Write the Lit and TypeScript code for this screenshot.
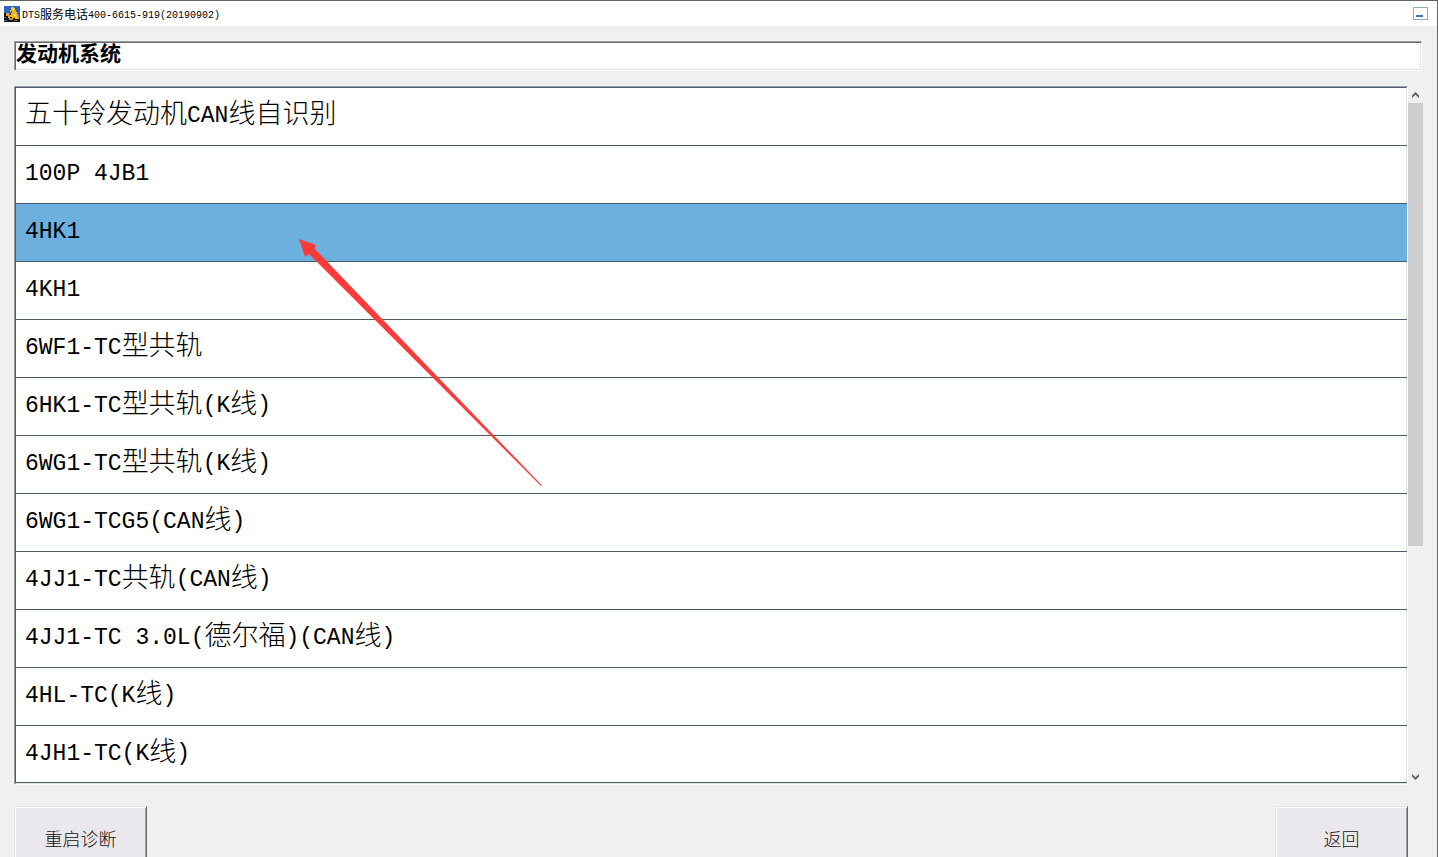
import { LitElement, html, css, svg } from "lit";
import { customElement, property, state } from "lit/decorators.js";
import { classMap } from "lit/directives/class-map.js";

const SYSTEMS = [
  "五十铃发动机CAN线自识别",
  "100P 4JB1",
  "4HK1",
  "4KH1",
  "6WF1-TC型共轨",
  "6HK1-TC型共轨(K线)",
  "6WG1-TC型共轨(K线)",
  "6WG1-TCG5(CAN线)",
  "4JJ1-TC共轨(CAN线)",
  "4JJ1-TC 3.0L(德尔福)(CAN线)",
  "4HL-TC(K线)",
  "4JH1-TC(K线)",
];

const mixed = (text: string) =>
  (text.match(/[\x20-\x7e]+|[^\x20-\x7e]+/g) ?? []).map((run) =>
    /^[\x20-\x7e]/.test(run) ? html`<span class="latin">${run}</span>` : run
  );

@customElement("title-bar")
class TitleBar extends LitElement {
  @property() label = "";

  static styles = css`
    :host {
      display: flex;
      align-items: center;
      justify-content: space-between;
      height: 25px;
      padding: 0 9px 0 4px;
      background: #fff;
      color: #000;
    }
    .title {
      display: flex;
      align-items: center;
      gap: 2px;
      font-size: 12px;
      font-weight: 400;
      line-height: 16px;
      white-space: pre;
    }
    .label {
      padding-top: 2px;
    }
    .latin {
      font-family: "Liberation Mono", monospace;
      font-size: 10px;
      vertical-align: 1px;
    }
    .minimize {
      display: flex;
      justify-content: flex-start;
      align-items: flex-end;
      width: 15px;
      height: 13px;
      padding: 0 0 2px 2px;
      box-sizing: border-box;
      border: 1px solid #8badc4;
      background: #fff;
    }
    .dash {
      width: 7px;
      height: 2px;
      background: #4a74af;
    }
  `;

  render() {
    return html`
      <div class="title">
        <svg width="16" height="16" viewBox="0 0 16 16" shape-rendering="crispEdges" aria-hidden="true">
          <rect width="16" height="16" fill="#2f63c4" />
          <path d="M0 7h3v2h3V8h8v3h2v5H0z" fill="#10141c" />
          <path d="M0 11h2v1H0zM0 14h3v1H0z" fill="#5a6a90" />
          <path d="M7 1h3v1h1v2h1v2h1v2h1v3h1v2h-4v-1H8v-1H6V9h1V7h1V5H7v1H6V4h1z" fill="#f2b71c" />
          <path d="M8 2h2v2H8zM10 8h2v2h-2z" fill="#ffe05a" />
          <path d="M2 7h3v2h1v3H4v-2H2z" fill="#e8a41c" />
          <path d="M5 12h4v2H5z" fill="#c98a18" />
          <path d="M10 14h3v1h-3z" fill="#8a6118" />
        </svg>
        <span class="label">${mixed(this.label)}</span>
      </div>
      <button class="minimize" aria-label="最小化"><span class="dash"></span></button>
    `;
  }
}

@customElement("scroll-rail")
class ScrollRail extends LitElement {
  @property({ type: Number }) share = 1;

  static styles = css`
    :host {
      display: flex;
      flex-direction: column;
      width: 15px;
      background: #f0f0f0;
    }
    .step {
      display: flex;
      align-items: center;
      justify-content: center;
      height: 17px;
      padding: 0;
      border: 0;
      background: none;
    }
    .track {
      flex: 1;
    }
    .thumb {
      background: #cdcdcd;
    }
  `;

  render() {
    const chevron = (d: string) => svg`<path d=${d} fill="#606060" />`;
    return html`
      <button class="step" aria-label="向上">
        <svg width="7" height="6" viewBox="0 0 7 6">${chevron("M3.5 0L7 3.5V6L3.5 2.7L0 6V3.5z")}</svg>
      </button>
      <div class="track"><div class="thumb" style="height:${this.share * 100}%"></div></div>
      <button class="step" aria-label="向下">
        <svg width="7" height="6" viewBox="0 0 7 6">${chevron("M3.5 6L7 2.5V0L3.5 3.3L0 0V2.5z")}</svg>
      </button>
    `;
  }
}

@customElement("app-root")
class AppRoot extends LitElement {
  @state() private selected = 2;

  static styles = css`
    :host {
      display: block;
      position: relative;
      box-sizing: border-box;
      height: 100vh;
      overflow: hidden;
      border-top: 1px solid #646464;
      border-right: 1px solid #646464;
      background: #f0f0f0;
      color: #000;
      font-family: "Noto Sans CJK SC", sans-serif;
      font-weight: 300;
    }
    main {
      display: flex;
      flex-direction: column;
      padding: 15px 14px 0;
    }
    .heading {
      display: block;
      box-sizing: border-box;
      height: 30px;
      margin: 0 1px 15px 0;
      padding: 0 1px 8px;
      border: 1px solid;
      border-color: #a0a0a0 #fff #fff #a0a0a0;
      box-shadow: inset 1px 1px #696969, inset -1px -1px #e3e3e3;
      background: #fff;
      color: #000;
      font: bold 21px/20px "Noto Sans CJK SC", sans-serif;
      outline: 0;
    }
    .browser {
      display: flex;
    }
    .list {
      flex: 1;
      background: #fff;
      border: 1px solid;
      border-color: #a0a0a0 #fff #fff #a0a0a0;
    }
    .rows {
      margin: 0;
      padding: 0;
      list-style: none;
      border: 1px solid;
      border-color: #4d5b68 #e3e3e3 #e3e3e3 #4d5b68;
    }
    .row {
      display: block;
      box-sizing: border-box;
      width: calc(100% + 1px);
      height: 58px;
      padding: 0 9px 6px;
      border: 0;
      border-bottom: 1px solid #4d5b68;
      background: none;
      color: #000;
      font: inherit;
      font-size: 27px;
      line-height: 48px;
      text-align: left;
      white-space: pre;
      overflow: hidden;
    }
    .rows li:last-child .row {
      height: 57px;
    }
    .row.selected {
      background: #6bb0de;
    }
    .latin {
      font-family: "Liberation Mono", monospace;
      font-size: 23px;
      vertical-align: 1px;
    }
    footer {
      display: flex;
      justify-content: space-between;
      padding: 21px 15px 0 0;
    }
    .action {
      width: 133px;
      height: 64px;
      padding: 0;
      border: 1px solid;
      border-color: #e3e3e3 #696969 #696969 #e3e3e3;
      box-shadow: inset 1px 1px #fff, inset -1px -1px #a0a0a0;
      background: #eae8ed;
      color: #111;
      font: inherit;
      font-size: 18px;
      line-height: 24px;
    }
    .pointer {
      position: absolute;
      left: 299px;
      top: 238px;
      pointer-events: none;
    }
  `;

  render() {
    return html`
      <title-bar label="DTS服务电话400-6615-919(20190902)"></title-bar>
      <main>
        <input class="heading" aria-label="当前系统" readonly .value=${"发动机系统"} />
        <div class="browser">
          <div class="list">
            <ul class="rows">
              ${SYSTEMS.map(
                (name, i) => html`<li>
                  <button
                    class=${classMap({ row: true, selected: i === this.selected })}
                    @click=${() => (this.selected = i)}
                  >${mixed(name)}</button>
                </li>`
              )}
            </ul>
          </div>
          <scroll-rail .share=${0.666}></scroll-rail>
        </div>
        <footer>
          <button class="action">重启诊断</button>
          <button class="action">返回</button>
        </footer>
      </main>
      <svg class="pointer" width="244" height="248" viewBox="0 0 244 248" aria-hidden="true">
        <path d="M0 0L17 6L15.5 9.5L243 246.5L242 247L10 15L6 18z" fill="#fb3b3a" />
      </svg>
    `;
  }
}
